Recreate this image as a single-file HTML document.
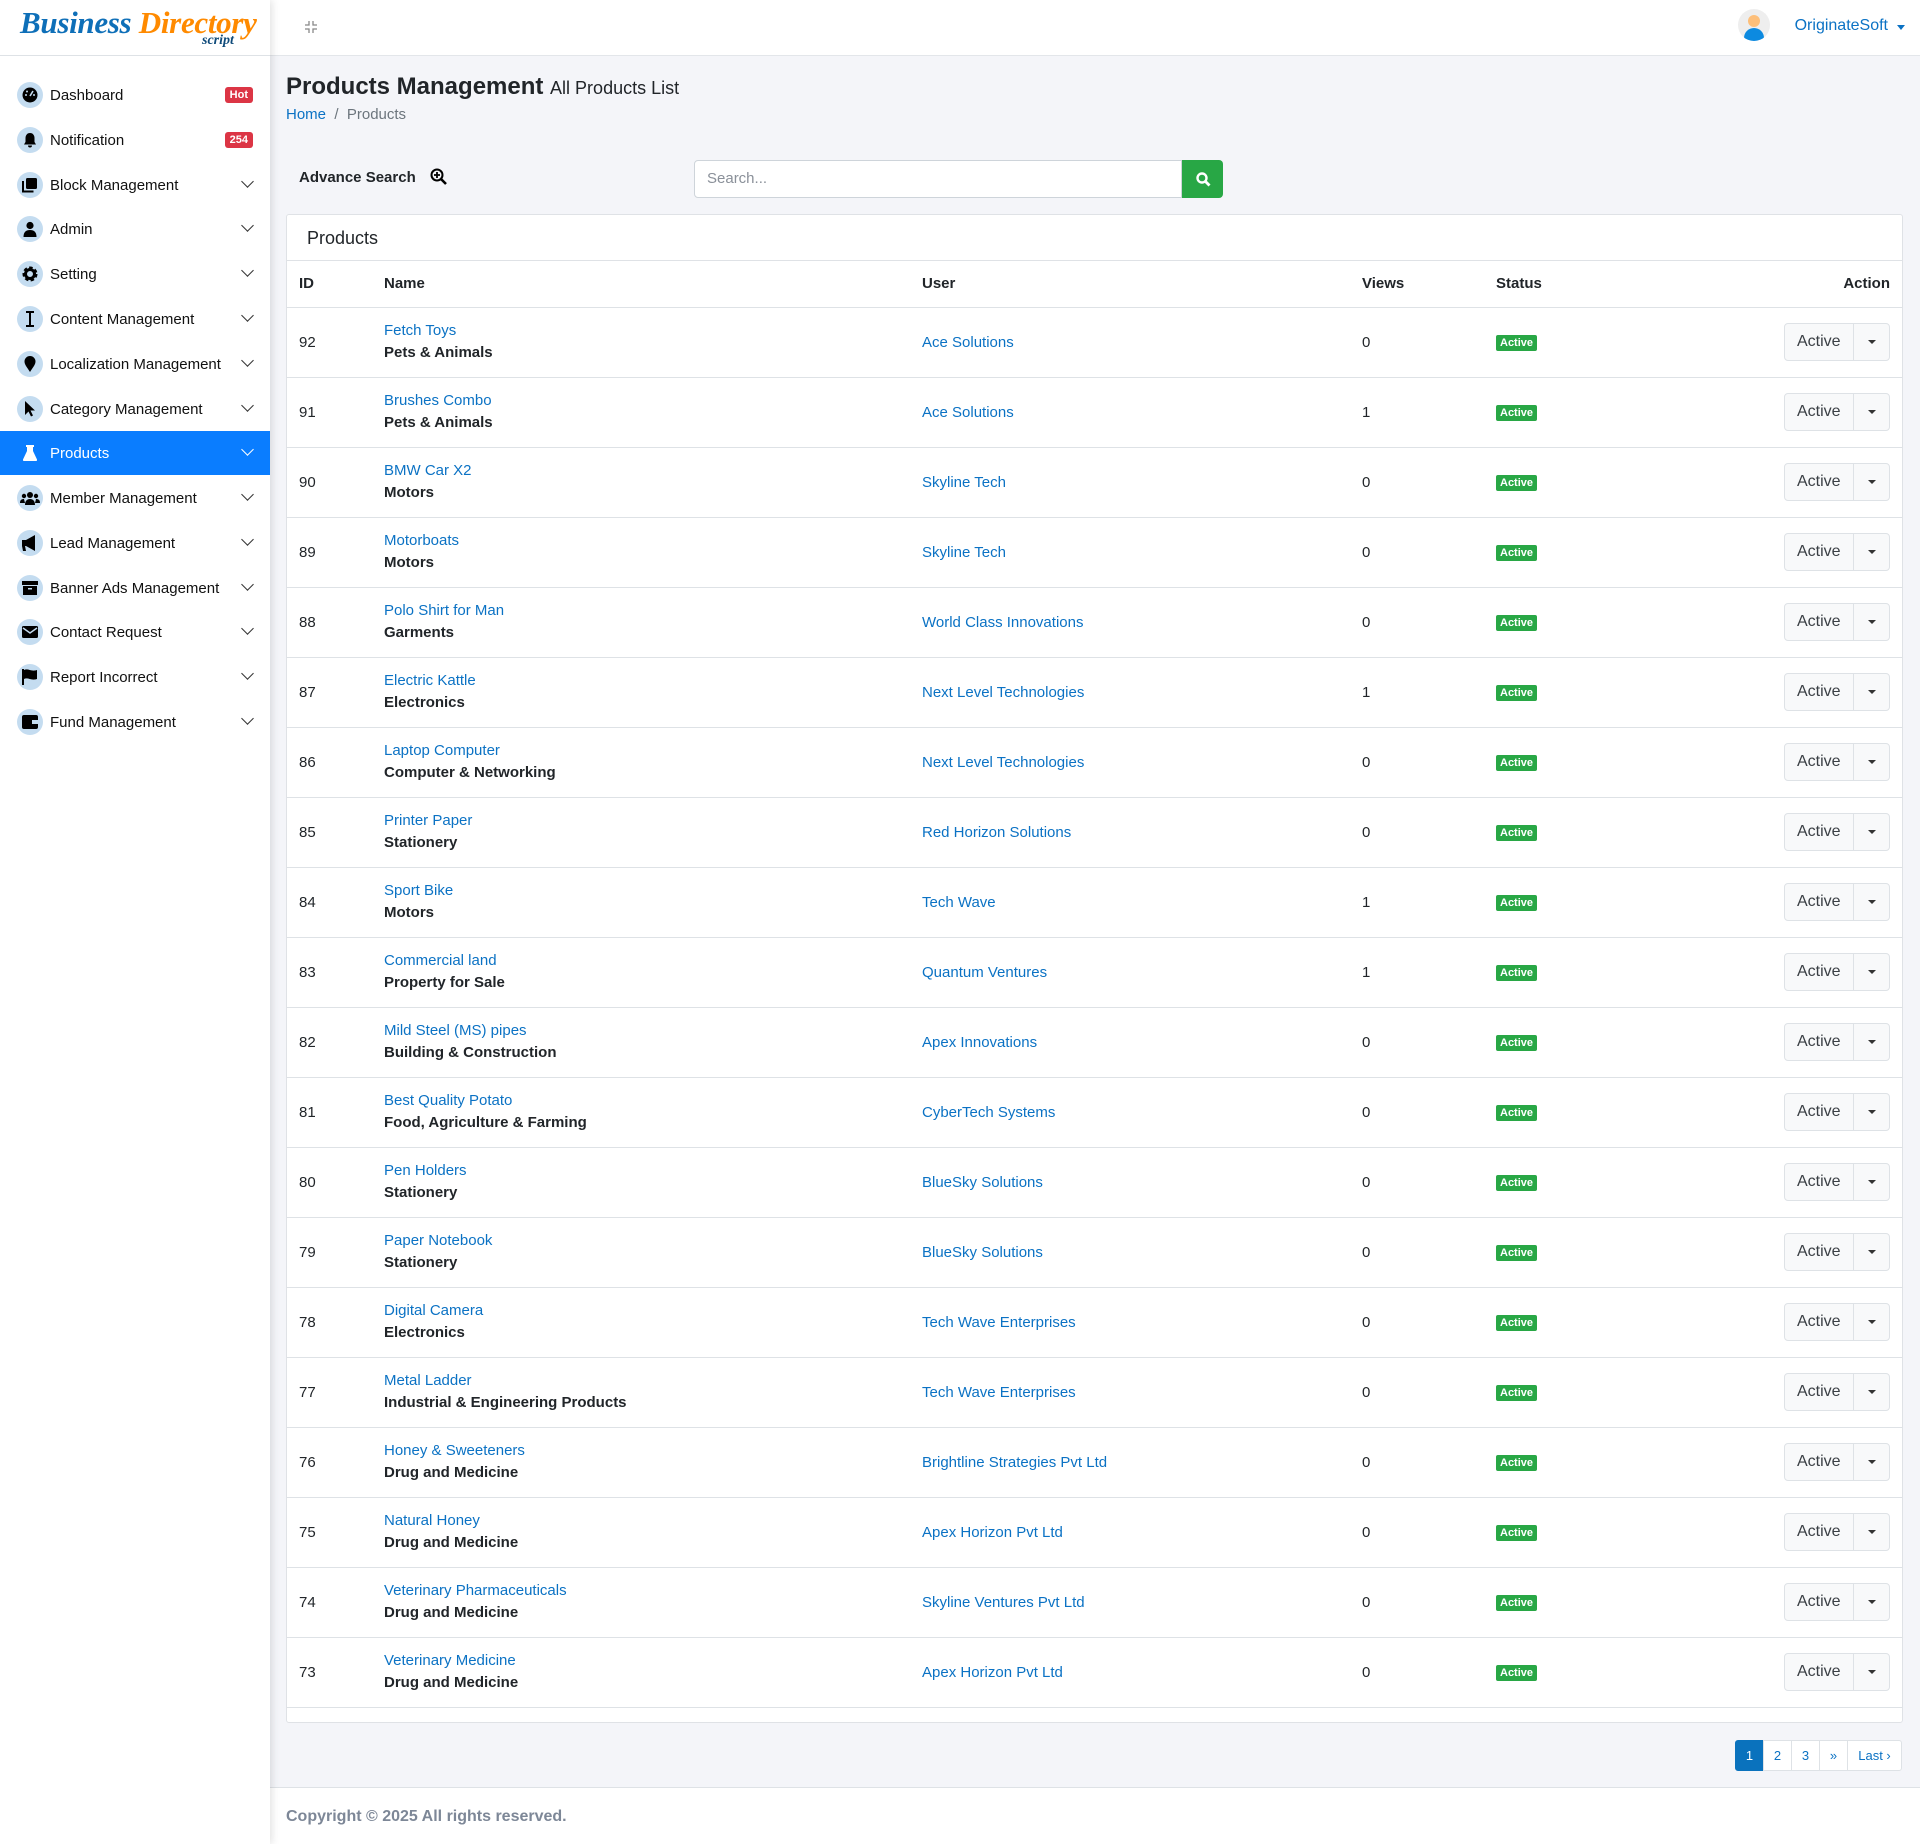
<!DOCTYPE html>
<html><head><meta charset="utf-8"><style>
*{box-sizing:border-box;margin:0;padding:0}
body{width:1920px;height:1844px;background:#f4f5f9;font-family:"Liberation Sans",sans-serif;font-size:15px;color:#212529;position:relative;overflow:hidden}
a{color:#0b72c4;text-decoration:none}
#sb{position:absolute;left:0;top:0;width:270px;height:1844px;background:#fff;box-shadow:2px 0 8px rgba(0,0,0,.12);z-index:2}
.logo{height:56px;border-bottom:1px solid #dee2e6;position:relative}
.logo .b{position:absolute;left:20px;top:5px;font-family:"Liberation Serif",serif;font-style:italic;font-weight:bold;font-size:31px;letter-spacing:-0.3px;color:#0e6fb8}
.logo .d{color:#ff8a00}
.logo .s{position:absolute;left:202px;top:33px;font-family:"Liberation Serif",serif;font-style:italic;font-weight:bold;font-size:14px;color:#0e4a7a}
.mi{position:absolute;left:0;width:270px;height:44px;display:flex;align-items:center}
.mi .ic{width:26px;height:26px;border-radius:50%;background:#c4dcf0;margin-left:17px;display:flex;align-items:center;justify-content:center}
.mi .t{margin-left:7px;font-size:15px;color:#111}
.mi .bd{position:absolute;right:17px;background:#dc3545;color:#fff;font-size:11px;font-weight:bold;padding:2px 5px;border-radius:3px}
.mi .ch{position:absolute;right:18px;top:14px;width:9px;height:9px;border-right:1.4px solid #333;border-bottom:1.4px solid #333;transform:rotate(45deg)}
.mi.act{background:#0a7dff}
.mi.act .ic{background:transparent}
.mi.act .t{color:#fff}
.mi.act .ch{border-color:#fff}
#hd{position:absolute;left:270px;top:0;right:0;height:56px;background:#fff;border-bottom:1px solid #e3e6ea}
h1{position:absolute;left:286px;top:73px;font-size:24px;font-weight:bold;color:#212529}
h1 small{font-size:18px;font-weight:normal}
.bc{position:absolute;left:286px;top:106px;font-size:15px;color:#6c757d}
.adv{position:absolute;left:299px;top:168px;font-weight:bold;font-size:15px}
.srch{position:absolute;left:694px;top:160px;width:488px;height:38px;background:#fff;border:1px solid #ced4da;border-radius:4px 0 0 4px;padding:9px 12px;color:#8a9099}
.sbtn{position:absolute;left:1182px;top:160px;width:41px;height:38px;background:#28a745;border-radius:0 4px 4px 0;display:flex;align-items:center;justify-content:center}
.card{position:absolute;left:286px;top:214px;width:1617px;height:1509px;background:#fff;border:1px solid #dfe2e6;border-radius:3px}
.ch2{height:46px;border-bottom:1px solid #dfe2e6;padding:13px 20px;font-size:18px}
table{border-collapse:collapse;width:100%}
th{height:46px;text-align:left;font-weight:bold;border-bottom:1px solid #dee2e6;padding:0 12px}
td{height:70px;border-bottom:1px solid #dee2e6;padding:0 12px;vertical-align:middle}
td .n{line-height:22px}
td .c{font-weight:bold;color:#212529}
.st{display:inline-block;background:#28a745;color:#fff;font-size:11px;font-weight:bold;padding:2px 4px;border-radius:2px}
.ab{display:inline-flex;height:38px;border:1px solid #dee2e6;border-radius:4px;background:#f8f9fa;float:right}
.ab span{padding:0 12px;line-height:36px;font-size:16px;color:#3a3f44;width:68px}
.ab i{width:36px;border-left:1px solid #dee2e6;position:relative}
.ab i:after{content:"";position:absolute;left:14px;top:16px;border:4px solid transparent;border-top:4px solid #333}
.pg{position:absolute;left:1736px;top:1740px;display:flex;height:31px}
.pg a{border:1px solid #dee2e6;margin-left:-1px;background:#fff;display:flex;align-items:center;justify-content:center;font-size:13px;width:29px}
.pg a.on{background:#0a72bd;color:#fff;border-color:#0a72bd;border-radius:3px 0 0 3px}
.ft{position:absolute;left:270px;top:1787px;right:0;bottom:0;background:#fff;border-top:1px solid #dee2e6;padding:20px 16px;color:#7d8797;font-weight:bold;font-size:16px}
</style></head><body>
<div id="sb">
<div class="logo"><span class="b">Business <span class="d">Directory</span></span><span class="s">script</span></div>
<div class="mi" style="top:73px"><span class="ic"><svg width="16" height="16" viewBox="0 0 16 16"><circle cx="8" cy="8" r="7.5" fill="#000"/><path d="M8 9L11 4" stroke="#c4dcf0" stroke-width="1.6"/><circle cx="4" cy="8" r="1" fill="#c4dcf0"/><circle cx="5" cy="4.5" r="1" fill="#c4dcf0"/><circle cx="12" cy="8" r="1" fill="#c4dcf0"/></svg></span><span class="t">Dashboard</span><span class="bd">Hot</span></div>
<div class="mi" style="top:118px"><span class="ic"><svg width="14" height="16" viewBox="0 0 14 16"><path d="M7 1C4 1 2.5 3.5 2.5 6v4L1 12.5h12L11.5 10V6C11.5 3.5 10 1 7 1zM5 13.5a2 2 0 0 0 4 0z" fill="#000"/></svg></span><span class="t">Notification</span><span class="bd">254</span></div>
<div class="mi" style="top:163px"><span class="ic"><svg width="16" height="16"><rect x="4" y="1" width="11" height="11" rx="1.5"/><path d="M1 4v10.5h10.5" stroke="#000" stroke-width="2" fill="none"/></svg></span><span class="t">Block Management</span><span class="ch"></span></div>
<div class="mi" style="top:207px"><span class="ic"><svg width="14" height="16"><circle cx="7" cy="4.5" r="3.6"/><path d="M0.5 16c0-5 2.5-7 6.5-7s6.5 2 6.5 7z"/></svg></span><span class="t">Admin</span><span class="ch"></span></div>
<div class="mi" style="top:252px"><span class="ic"><svg width="16" height="16" viewBox="0 0 16 16"><circle cx="8" cy="8" r="5.5" fill="none" stroke="#000" stroke-width="4" stroke-dasharray="3 2"/><circle cx="8" cy="8" r="4.5" fill="none" stroke="#000" stroke-width="3"/></svg></span><span class="t">Setting</span><span class="ch"></span></div>
<div class="mi" style="top:297px"><span class="ic"><svg width="10" height="16"><path d="M1 1h8M1 15h8M5 1v14" stroke="#000" stroke-width="2"/></svg></span><span class="t">Content Management</span><span class="ch"></span></div>
<div class="mi" style="top:342px"><span class="ic"><svg width="12" height="16"><path d="M6 16C2 10 0.5 8 0.5 5.5a5.5 5.5 0 0 1 11 0C11.5 8 10 10 6 16z"/></svg></span><span class="t">Localization Management</span><span class="ch"></span></div>
<div class="mi" style="top:387px"><span class="ic"><svg width="12" height="16"><path d="M1 0v14l3.5-3.5 2.5 5 2-1-2.5-5H11z"/></svg></span><span class="t">Category Management</span><span class="ch"></span></div>
<div class="mi act" style="top:431px"><span class="ic"><svg width="14" height="16"><path d="M3 0h8v2H10v4l4 8.5c.4 1-.2 1.5-1 1.5H1c-.8 0-1.4-.5-1-1.5L4 6V2H3z" fill="#fff"/></svg></span><span class="t">Products</span><span class="ch"></span></div>
<div class="mi" style="top:476px"><span class="ic"><svg width="20" height="14"><circle cx="10" cy="4" r="3"/><circle cx="4" cy="5" r="2.2"/><circle cx="16" cy="5" r="2.2"/><path d="M5 14c0-4 2-6 5-6s5 2 5 6zM0 12c0-3 1.5-4 4-4l1 4zM20 12c0-3-1.5-4-4-4l-1 4z"/></svg></span><span class="t">Member Management</span><span class="ch"></span></div>
<div class="mi" style="top:521px"><span class="ic"><svg width="18" height="16"><path d="M1 5h4l9-5v16l-9-5H4l1 5H2l-1-5z"/></svg></span><span class="t">Lead Management</span><span class="ch"></span></div>
<div class="mi" style="top:566px"><span class="ic"><svg width="16" height="16"><rect x="0" y="1" width="16" height="4"/><rect x="1" y="6" width="14" height="9"/><rect x="6" y="8" width="4" height="1.5" fill="#c4dcf0"/></svg></span><span class="t">Banner Ads Management</span><span class="ch"></span></div>
<div class="mi" style="top:610px"><span class="ic"><svg width="16" height="14"><rect x="0" y="1" width="16" height="12" rx="1.5"/><path d="M1 3l7 5 7-5" stroke="#c4dcf0" stroke-width="1.5" fill="none"/></svg></span><span class="t">Contact Request</span><span class="ch"></span></div>
<div class="mi" style="top:655px"><span class="ic"><svg width="16" height="16"><path d="M1 0v16" stroke="#000" stroke-width="2"/><path d="M2 1c4-2 7 2 13 0v9c-6 2-9-2-13 0z"/></svg></span><span class="t">Report Incorrect</span><span class="ch"></span></div>
<div class="mi" style="top:700px"><span class="ic"><svg width="16" height="14"><rect x="0" y="0" width="16" height="14" rx="2"/><rect x="10" y="5" width="6" height="4" fill="#c4dcf0"/></svg></span><span class="t">Fund Management</span><span class="ch"></span></div>
</div>
<div id="hd">
<svg style="position:absolute;left:34px;top:20px" width="14" height="14" viewBox="0 0 14 14" stroke="#888" stroke-width="1.3" fill="none"><path d="M5 1v4H1M9 1v4h4M5 13V9H1M9 13V9h4"/></svg>
<div style="position:absolute;right:150px;top:9px;width:32px;height:32px;border-radius:50%;background:#eee;overflow:hidden"><div style="position:absolute;left:10px;top:6px;width:12px;height:12px;border-radius:50%;background:#fdbf7a"></div><div style="position:absolute;left:6px;top:19px;width:20px;height:16px;border-radius:10px 10px 0 0;background:#0c8ae0"></div></div>
<div style="position:absolute;right:32px;top:17px;color:#0b72c4;font-size:16px">OriginateSoft</div>
<div style="position:absolute;right:15px;top:25px;border:4px solid transparent;border-top:5px solid #0b72c4"></div>
</div>
<h1>Products Management <small>All Products List</small></h1>
<div class="bc"><a>Home</a> &nbsp;/&nbsp; Products</div>
<div class="adv">Advance Search <svg style="vertical-align:-3px;margin-left:10px" width="17" height="17" viewBox="0 0 17 17"><circle cx="7" cy="7" r="5.5" fill="none" stroke="#000" stroke-width="2"/><path d="M11 11l5 5" stroke="#000" stroke-width="2.6"/><path d="M7 4v6M4 7h6" stroke="#000" stroke-width="1.8"/></svg></div>
<div class="srch">Search...</div>
<div class="sbtn"><svg width="16" height="16"><circle cx="7" cy="7" r="4.5" fill="none" stroke="#fff" stroke-width="2.4"/><path d="M10 10l4.5 4.5" stroke="#fff" stroke-width="2.8"/></svg></div>
<div class="card"><div class="ch2">Products</div>
<table><tr><th style="width:85px">ID</th><th style="width:538px">Name</th><th style="width:440px">User</th><th style="width:134px">Views</th><th style="width:150px">Status</th><th style="text-align:right">Action</th></tr>
<tr><td>92</td><td><div class="n"><a>Fetch Toys</a><br><span class="c">Pets &amp; Animals</span></div></td><td><a>Ace Solutions</a></td><td>0</td><td><span class="st">Active</span></td><td><div class="ab"><span>Active</span><i></i></div></td></tr>
<tr><td>91</td><td><div class="n"><a>Brushes Combo</a><br><span class="c">Pets &amp; Animals</span></div></td><td><a>Ace Solutions</a></td><td>1</td><td><span class="st">Active</span></td><td><div class="ab"><span>Active</span><i></i></div></td></tr>
<tr><td>90</td><td><div class="n"><a>BMW Car X2</a><br><span class="c">Motors</span></div></td><td><a>Skyline Tech</a></td><td>0</td><td><span class="st">Active</span></td><td><div class="ab"><span>Active</span><i></i></div></td></tr>
<tr><td>89</td><td><div class="n"><a>Motorboats</a><br><span class="c">Motors</span></div></td><td><a>Skyline Tech</a></td><td>0</td><td><span class="st">Active</span></td><td><div class="ab"><span>Active</span><i></i></div></td></tr>
<tr><td>88</td><td><div class="n"><a>Polo Shirt for Man</a><br><span class="c">Garments</span></div></td><td><a>World Class Innovations</a></td><td>0</td><td><span class="st">Active</span></td><td><div class="ab"><span>Active</span><i></i></div></td></tr>
<tr><td>87</td><td><div class="n"><a>Electric Kattle</a><br><span class="c">Electronics</span></div></td><td><a>Next Level Technologies</a></td><td>1</td><td><span class="st">Active</span></td><td><div class="ab"><span>Active</span><i></i></div></td></tr>
<tr><td>86</td><td><div class="n"><a>Laptop Computer</a><br><span class="c">Computer &amp; Networking</span></div></td><td><a>Next Level Technologies</a></td><td>0</td><td><span class="st">Active</span></td><td><div class="ab"><span>Active</span><i></i></div></td></tr>
<tr><td>85</td><td><div class="n"><a>Printer Paper</a><br><span class="c">Stationery</span></div></td><td><a>Red Horizon Solutions</a></td><td>0</td><td><span class="st">Active</span></td><td><div class="ab"><span>Active</span><i></i></div></td></tr>
<tr><td>84</td><td><div class="n"><a>Sport Bike</a><br><span class="c">Motors</span></div></td><td><a>Tech Wave</a></td><td>1</td><td><span class="st">Active</span></td><td><div class="ab"><span>Active</span><i></i></div></td></tr>
<tr><td>83</td><td><div class="n"><a>Commercial land</a><br><span class="c">Property for Sale</span></div></td><td><a>Quantum Ventures</a></td><td>1</td><td><span class="st">Active</span></td><td><div class="ab"><span>Active</span><i></i></div></td></tr>
<tr><td>82</td><td><div class="n"><a>Mild Steel (MS) pipes</a><br><span class="c">Building &amp; Construction</span></div></td><td><a>Apex Innovations</a></td><td>0</td><td><span class="st">Active</span></td><td><div class="ab"><span>Active</span><i></i></div></td></tr>
<tr><td>81</td><td><div class="n"><a>Best Quality Potato</a><br><span class="c">Food, Agriculture &amp; Farming</span></div></td><td><a>CyberTech Systems</a></td><td>0</td><td><span class="st">Active</span></td><td><div class="ab"><span>Active</span><i></i></div></td></tr>
<tr><td>80</td><td><div class="n"><a>Pen Holders</a><br><span class="c">Stationery</span></div></td><td><a>BlueSky Solutions</a></td><td>0</td><td><span class="st">Active</span></td><td><div class="ab"><span>Active</span><i></i></div></td></tr>
<tr><td>79</td><td><div class="n"><a>Paper Notebook</a><br><span class="c">Stationery</span></div></td><td><a>BlueSky Solutions</a></td><td>0</td><td><span class="st">Active</span></td><td><div class="ab"><span>Active</span><i></i></div></td></tr>
<tr><td>78</td><td><div class="n"><a>Digital Camera</a><br><span class="c">Electronics</span></div></td><td><a>Tech Wave Enterprises</a></td><td>0</td><td><span class="st">Active</span></td><td><div class="ab"><span>Active</span><i></i></div></td></tr>
<tr><td>77</td><td><div class="n"><a>Metal Ladder</a><br><span class="c">Industrial &amp; Engineering Products</span></div></td><td><a>Tech Wave Enterprises</a></td><td>0</td><td><span class="st">Active</span></td><td><div class="ab"><span>Active</span><i></i></div></td></tr>
<tr><td>76</td><td><div class="n"><a>Honey &amp; Sweeteners</a><br><span class="c">Drug and Medicine</span></div></td><td><a>Brightline Strategies Pvt Ltd</a></td><td>0</td><td><span class="st">Active</span></td><td><div class="ab"><span>Active</span><i></i></div></td></tr>
<tr><td>75</td><td><div class="n"><a>Natural Honey</a><br><span class="c">Drug and Medicine</span></div></td><td><a>Apex Horizon Pvt Ltd</a></td><td>0</td><td><span class="st">Active</span></td><td><div class="ab"><span>Active</span><i></i></div></td></tr>
<tr><td>74</td><td><div class="n"><a>Veterinary Pharmaceuticals</a><br><span class="c">Drug and Medicine</span></div></td><td><a>Skyline Ventures Pvt Ltd</a></td><td>0</td><td><span class="st">Active</span></td><td><div class="ab"><span>Active</span><i></i></div></td></tr>
<tr><td>73</td><td><div class="n"><a>Veterinary Medicine</a><br><span class="c">Drug and Medicine</span></div></td><td><a>Apex Horizon Pvt Ltd</a></td><td>0</td><td><span class="st">Active</span></td><td><div class="ab"><span>Active</span><i></i></div></td></tr>
</table></div>
<div class="pg"><a class="on">1</a><a>2</a><a>3</a><a>»</a><a style="width:55px;border-radius:0 3px 3px 0">Last ›</a></div>
<div class="ft">Copyright © 2025 All rights reserved.</div>
</body></html>
